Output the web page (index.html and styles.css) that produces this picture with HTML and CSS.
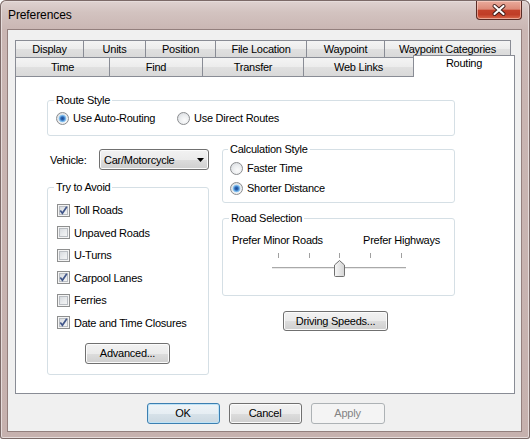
FILE: index.html
```html
<!DOCTYPE html>
<html>
<head>
<meta charset="utf-8">
<title>Preferences</title>
<link rel="stylesheet" href="styles.css">
</head>
<body>
<div class="window">
  <div class="titlebar">
    <span class="title">Preferences</span>
    <div class="close">
      <svg width="44" height="17" viewBox="0 0 44 17">
        <path d="M17.5 4 L26.5 12 M26.5 4 L17.5 12" stroke="#3b1a16" stroke-width="4" stroke-linecap="round"/>
        <path d="M17.5 4 L26.5 12 M26.5 4 L17.5 12" stroke="#ffffff" stroke-width="2.2" stroke-linecap="round"/>
      </svg>
    </div>
  </div>
  <div class="client">
    <div class="tabs">
      <div class="tabrow row1">
        <div class="tab t-display">Display</div>
        <div class="tab t-units">Units</div>
        <div class="tab t-position">Position</div>
        <div class="tab t-file">File Location</div>
        <div class="tab t-waypoint">Waypoint</div>
        <div class="tab t-wpcat">Waypoint Categories</div>
      </div>
      <div class="tabrow row2">
        <div class="tab t-time">Time</div>
        <div class="tab t-find">Find</div>
        <div class="tab t-transfer">Transfer</div>
        <div class="tab t-web">Web Links</div>
        <div class="tab t-routing selected">Routing</div>
      </div>
    </div>
    <div class="panel">
      <fieldset class="group route">
        <legend class="lg-route">Route Style</legend>
        <div class="inline-opts">
          <div class="opt opt-auto"><span class="radio on"></span>Use Auto-Routing</div>
          <div class="opt"><span class="radio"></span>Use Direct Routes</div>
        </div>
      </fieldset>
      <div class="columns">
        <div class="col-left">
          <div class="vehicle">
            <span>Vehicle:</span>
            <div class="combo">
              <span>Car/Motorcycle</span>
              <svg class="arrow" width="7" height="4" viewBox="0 0 7 4"><path d="M0 0 H7 L3.5 4 Z" fill="#000"/></svg>
            </div>
          </div>
          <fieldset class="group avoid">
            <legend class="lg-avoid">Try to Avoid</legend>
            <div class="checks">
              <div class="chk"><span class="cb"><svg width="11" height="11" viewBox="0 0 11 11"><path d="M2.3 5.6 L4.4 8.3 L8.8 1.8" fill="none" stroke="#41568a" stroke-width="1.7"/></svg></span>Toll Roads</div>
              <div class="chk"><span class="cb"></span>Unpaved Roads</div>
              <div class="chk"><span class="cb"></span>U-Turns</div>
              <div class="chk"><span class="cb"><svg width="11" height="11" viewBox="0 0 11 11"><path d="M2.3 5.6 L4.4 8.3 L8.8 1.8" fill="none" stroke="#41568a" stroke-width="1.7"/></svg></span>Carpool Lanes</div>
              <div class="chk"><span class="cb"></span>Ferries</div>
              <div class="chk"><span class="cb"><svg width="11" height="11" viewBox="0 0 11 11"><path d="M2.3 5.6 L4.4 8.3 L8.8 1.8" fill="none" stroke="#41568a" stroke-width="1.7"/></svg></span>Date and Time Closures</div>
            </div>
            <div class="btn btn-advanced">Advanced...</div>
          </fieldset>
        </div>
        <div class="col-right">
          <fieldset class="group calc">
            <legend class="lg-calc">Calculation Style</legend>
            <div class="opt opt-row"><span class="radio"></span>Faster Time</div>
            <div class="opt opt-row"><span class="radio on"></span>Shorter Distance</div>
          </fieldset>
          <fieldset class="group road">
            <legend class="lg-road">Road Selection</legend>
            <div class="slider-labels"><span>Prefer Minor Roads</span><span>Prefer Highways</span></div>
            <svg class="slider" width="135" height="30" viewBox="0 0 135 30">
              <defs>
                <linearGradient id="thumbg" x1="0" y1="0" x2="1" y2="0">
                  <stop offset="0" stop-color="#f7f7f7"/>
                  <stop offset="1" stop-color="#d4d4d4"/>
                </linearGradient>
              </defs>
              <g stroke="#a0a0a0" stroke-width="1">
                <line x1="6.5" y1="3" x2="6.5" y2="8"/>
                <line x1="37.5" y1="3" x2="37.5" y2="8"/>
                <line x1="67.5" y1="3" x2="67.5" y2="8"/>
                <line x1="98.5" y1="3" x2="98.5" y2="8"/>
                <line x1="129.5" y1="3" x2="129.5" y2="8"/>
              </g>
              <line x1="0" y1="17.5" x2="134" y2="17.5" stroke="#a9a9a9"/>
              <line x1="0" y1="18.5" x2="134" y2="18.5" stroke="#e9e9e9"/>
              <path d="M62.5 15 L67.5 10.5 L72.5 15 L72.5 25.5 Q72.5 26.5 71.5 26.5 L63.5 26.5 Q62.5 26.5 62.5 25.5 Z" fill="url(#thumbg)" stroke="#707070"/>
            </svg>
          </fieldset>
          <div class="btn btn-speeds">Driving Speeds...</div>
        </div>
      </div>
    </div>
    <div class="buttons">
      <div class="btn btn-dlg default">OK</div>
      <div class="btn btn-dlg">Cancel</div>
      <div class="btn btn-dlg disabled">Apply</div>
    </div>
  </div>
</div>
</body>
</html>
```

FILE: styles.css
```css
html, body {
  margin: 0;
  padding: 0;
  background: #ffffff;
}

body {
  font-family: "Liberation Sans", Arial, sans-serif;
  font-size: 11px;
  letter-spacing: -0.25px;
  color: #000;
}

.window {
  width: 530px;
  height: 439px;
  box-sizing: border-box;
  padding: 0 8px 7px 7px;
  display: flex;
  flex-direction: column;
  background: linear-gradient(#e0d4d2 0px, #d3c3c0 12px, #cab6b3 30px, #c6b1ae 100%);
  border-radius: 6px 6px 3px 3px;
  box-shadow: inset 0 0 0 1px #7c6a68, inset 0 0 0 2px #e6dcdb;
}

.titlebar {
  height: 29px;
  display: flex;
  align-items: flex-start;
  flex: none;
}

.title {
  font-size: 12px;
  line-height: 16px;
  padding-top: 7px;
  padding-left: 1px;
  letter-spacing: -0.1px;
}

.close {
  margin-left: auto;
  margin-top: 1px;
  width: 46px;
  height: 19px;
  box-sizing: border-box;
  border: 1px solid #5a2b25;
  border-top: none;
  border-radius: 0 0 4px 4px;
  background: linear-gradient(#e9ab9c 0%, #dc8a78 45%, #c4422b 52%, #c03d27 75%, #d9694c 100%);
  box-shadow: inset 0 0 0 1px rgba(255, 220, 210, 0.55);
  display: flex;
  align-items: center;
  justify-content: center;
}

.close svg {
  display: block;
}

.client {
  flex: 1;
  border: 1px solid #937f7d;
  background: #f0f0f0;
  padding: 10px 6px 0 7px;
  display: flex;
  flex-direction: column;
}

/* Tabs */
.tabrow {
  display: flex;
}

.row1 {
  height: 18px;
}

.row2 {
  height: 19px;
  margin-top: -1px;
  align-items: flex-end;
}

.tab {
  box-sizing: border-box;
  border: 1px solid #898c95;
  margin-left: -1px;
  text-align: center;
  background: linear-gradient(#f4f4f4 0%, #ececec 50%, #e0e0e0 51%, #d9d9d9 100%);
  white-space: nowrap;
}

.tab:first-child {
  margin-left: 0;
}

.row1 .tab {
  height: 18px;
  line-height: 16px;
}

.row2 .tab {
  height: 19px;
  line-height: 18px;
  border-bottom: none;
}

.row2 .tab.selected {
  height: 22px;
  margin-top: -3px;
  margin-bottom: -1px;
  line-height: 15px;
  background: #ffffff;
  position: relative;
  z-index: 1;
}

.t-display { width: 69px; }
.t-units { width: 63px; }
.t-position { width: 71px; }
.t-file { width: 92px; }
.t-waypoint { width: 79px; }
.t-wpcat { width: 127px; }
.t-time { width: 95px; }
.t-find { width: 94px; }
.t-transfer { width: 102px; }
.t-web { width: 111px; }
.t-routing { width: 102px; }

/* Panel */
.panel {
  width: 500px;
  height: 318px;
  box-sizing: border-box;
  border: 1px solid #898c95;
  background: #ffffff;
  padding: 17px 0 0 31px;
}

.group {
  margin: 0;
  border: 1px solid #d5dfe5;
  border-radius: 3px;
  min-width: 0;
  box-sizing: border-box;
}

.group legend {
  padding: 0 2px;
  line-height: 13px;
}

.route {
  width: 408px;
  padding: 3px 0 9px 8px;
}

.lg-route { margin-left: -2px; }
.lg-avoid { margin-left: -3px; }
.lg-calc { margin-left: -2px; }
.lg-road { margin-left: -3px; }

.inline-opts {
  display: flex;
}

.opt {
  display: flex;
  align-items: center;
  height: 16px;
  white-space: nowrap;
}

.opt-auto {
  width: 121px;
}

.radio {
  flex: none;
  width: 13px;
  height: 13px;
  box-sizing: border-box;
  border: 1px solid #8b8d90;
  border-radius: 50%;
  margin-right: 4px;
  background: radial-gradient(circle at 60% 65%, #fbfbfb 0%, #eceef0 45%, #d3d6da 100%);
}

.radio.on {
  background:
    radial-gradient(circle at 50% 50%, #1d4d92 0px, #2c66b5 1.6px, #78b7ea 3px, #9bcdf2 3.6px, rgba(255,255,255,0) 4.2px),
    radial-gradient(circle at 60% 65%, #fbfbfb 0%, #eceef0 45%, #d3d6da 100%);
}

.columns {
  display: flex;
  gap: 13px;
  margin-top: 7px;
}

.col-left {
  width: 162px;
  padding-top: 6px;
  display: flex;
  flex-direction: column;
}

.col-right {
  width: 233px;
  display: flex;
  flex-direction: column;
}

.vehicle {
  display: flex;
  align-items: center;
  height: 21px;
  padding-left: 3px;
}

.combo {
  margin-left: auto;
  width: 110px;
  height: 21px;
  box-sizing: border-box;
  border: 1px solid #707070;
  border-radius: 3px;
  background: linear-gradient(#f2f2f2 0%, #ebebeb 50%, #dddddd 51%, #cfcfcf 100%);
  box-shadow: inset 0 0 0 1px #fbfbfb;
  display: flex;
  align-items: center;
  padding-left: 4px;
  padding-right: 4px;
}

.combo .arrow {
  margin-left: auto;
  display: block;
}

.avoid {
  width: 162px;
  margin-top: 11px;
  padding: 8.5px 0 10px 9px;
  display: flex;
  flex-direction: column;
}

.checks {
  display: flex;
  flex-direction: column;
  gap: 7.6px;
}

.chk {
  display: flex;
  align-items: center;
  height: 15px;
  white-space: nowrap;
}

.cb {
  flex: none;
  width: 13px;
  height: 13px;
  box-sizing: border-box;
  border: 1px solid #8e8f8f;
  margin-right: 4px;
  background: linear-gradient(135deg, #cfd3d8 0%, #e9ebed 55%, #f8f8f8 100%);
  box-shadow: inset 0 0 0 1px #f4f4f4, inset 0 0 0 2px #b9bdc2;
  display: flex;
  align-items: center;
  justify-content: center;
}

.cb svg {
  display: block;
}

.btn {
  box-sizing: border-box;
  border: 1px solid #707070;
  border-radius: 3px;
  background: linear-gradient(#f2f2f2 0%, #ebebeb 50%, #dddddd 51%, #cfcfcf 100%);
  box-shadow: inset 0 0 0 1px #fbfbfb;
  text-align: center;
  white-space: nowrap;
}

.btn-advanced {
  align-self: flex-start;
  margin-top: 12.5px;
  margin-left: 28px;
  width: 85px;
  height: 21px;
  line-height: 19px;
}

.calc {
  padding: 2px 0 4px 7px;
}

.opt-row {
  height: 20px;
}

.road {
  margin-top: 9px;
  padding: 8px 14px 15px 9px;
}

.slider-labels {
  display: flex;
  justify-content: space-between;
  height: 14px;
  line-height: 14px;
}

.slider {
  display: block;
  margin: 3px 0 0 40px;
}

.btn-speeds {
  margin-top: 15px;
  margin-left: 61px;
  width: 105px;
  height: 20px;
  line-height: 18px;
}

.buttons {
  display: flex;
  justify-content: center;
  gap: 9px;
  margin-top: 9px;
  padding-left: 1px;
}

.btn-dlg {
  width: 73px;
  height: 21px;
  line-height: 19px;
}

.btn-dlg.disabled {
  width: 74px;
}

.btn.default {
  border-color: #3c7fb1;
  box-shadow: inset 0 0 0 1px #bfe3f6;
  background: linear-gradient(#eef4f8 0%, #e6eef3 50%, #d7e2e9 51%, #cbd8e1 100%);
}

.btn.disabled {
  border-color: #adb2b5;
  background: #f4f4f4;
  box-shadow: none;
  color: #838383;
}
```
